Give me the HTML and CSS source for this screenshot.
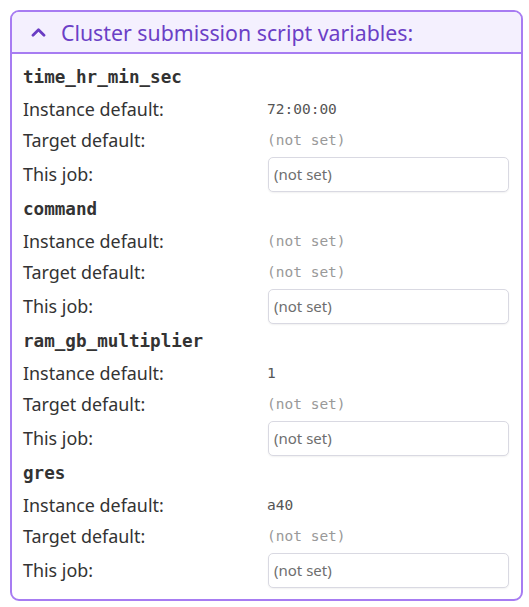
FILE: index.html
```html
<!DOCTYPE html>
<html>
<head>
<meta charset="utf-8">
<link rel="stylesheet" href="styles.css">
</head>
<body>
<div class="panel">
  <div class="panel-header">
    <svg class="chev" width="15" height="10" viewBox="0 0 15 10"><path d="M2 8.3 L7.5 2.8 L13 8.3" fill="none" stroke="#6a3dc4" stroke-width="2.8" stroke-linecap="round" stroke-linejoin="round"/></svg>
    <span class="title">Cluster submission script variables:</span>
  </div>
  <div class="panel-body">
    <div class="var">
      <div class="var-name">time_hr_min_sec</div>
      <div class="row"><span class="label">Instance default:</span><span class="val">72:00:00</span></div>
      <div class="row"><span class="label">Target default:</span><span class="val unset">(not set)</span></div>
      <div class="row job"><span class="label">This job:</span><input class="inp" type="text" placeholder="(not set)"></div>
    </div>
    <div class="var">
      <div class="var-name">command</div>
      <div class="row"><span class="label">Instance default:</span><span class="val unset">(not set)</span></div>
      <div class="row"><span class="label">Target default:</span><span class="val unset">(not set)</span></div>
      <div class="row job"><span class="label">This job:</span><input class="inp" type="text" placeholder="(not set)"></div>
    </div>
    <div class="var">
      <div class="var-name">ram_gb_multiplier</div>
      <div class="row"><span class="label">Instance default:</span><span class="val">1</span></div>
      <div class="row"><span class="label">Target default:</span><span class="val unset">(not set)</span></div>
      <div class="row job"><span class="label">This job:</span><input class="inp" type="text" placeholder="(not set)"></div>
    </div>
    <div class="var">
      <div class="var-name">gres</div>
      <div class="row"><span class="label">Instance default:</span><span class="val">a40</span></div>
      <div class="row"><span class="label">Target default:</span><span class="val unset">(not set)</span></div>
      <div class="row job"><span class="label">This job:</span><input class="inp" type="text" placeholder="(not set)"></div>
    </div>
  </div>
</div>
</body>
</html>
```
FILE: styles.css
```css
html, body { margin: 0; padding: 0; background: #fff; }
body { padding: 10px 0 0 10px; font-family: "Noto Sans", sans-serif; }
.panel {
  width: 513px;
  height: 591px;
  border: 2px solid #a77cf2;
  border-radius: 9px;
  overflow: hidden;
  box-sizing: border-box;
}
.panel-header {
  height: 42px;
  background: #f4f0fe;
  border-bottom: 2px solid #a77cf2;
  box-sizing: border-box;
  display: flex;
  align-items: center;
  padding-left: 19px;
  gap: 15px;
}
.chev { display: block; margin-top: 0px; }
.title { color: #6b3fc6; font-size: 21.3px; letter-spacing: 0; }
.panel-body { padding: 7px 0 0 11px; }
.var-name {
  font-family: "DejaVu Sans Mono", monospace;
  font-weight: bold;
  font-size: 17.6px;
  color: #333;
  height: 32px;
  line-height: 32px;
}
.row { display: flex; align-items: center; height: 31px; }
.row.job { height: 38px; }
.label { width: 244px; font-size: 17.9px; color: #333; white-space: nowrap; }
.val { font-family: "DejaVu Sans Mono", monospace; font-size: 14.5px; color: #555; }
.val.unset { color: #999; }
.inp {
  width: 241px;
  height: 35px;
  box-sizing: border-box;
  border: 1px solid #d9d9e2;
  border-radius: 5px;
  margin-left: 1px;
  padding: 0 5px;
  font-family: "Noto Sans", sans-serif;
  font-size: 15px;
  box-shadow: 0 1px 2px rgba(0,0,0,0.06);
}
.inp::placeholder { color: #6e6e6e; }
```
